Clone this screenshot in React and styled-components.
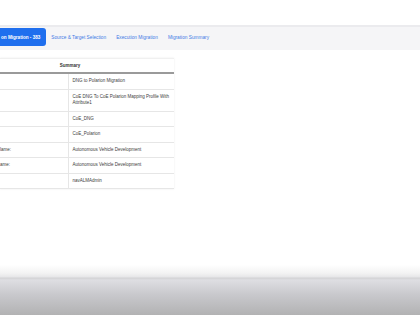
import React from "react";
import styled, { createGlobalStyle } from "styled-components";

const GlobalStyle = createGlobalStyle`
  html, body {
    margin: 0;
    padding: 0;
    background: #fff;
    overflow: hidden;
  }
  #root {
    height: 315px;
  }
`;

const Page = styled.div`
  height: 315px;
  display: flex;
  flex-direction: column;
  font-family: "Liberation Sans", Arial, sans-serif;
  overflow: hidden;
`;

const TabBar = styled.div`
  margin-top: 25px;
  height: 22px;
  display: flex;
  align-items: flex-start;
  padding-top: 1px;
  background: #f5f5f7;
  border-top: 2px solid #ebebee;
`;

const Tab = styled.div`
  height: 18px;
  display: flex;
  align-items: center;
  padding: ${(p) => (p.active ? "0 6px 0 1px" : "0 5px")};
  font-size: ${(p) => (p.active ? "4.6px" : "4.75px")};
  font-weight: ${(p) => (p.active ? 700 : 400)};
  color: ${(p) => (p.active ? "#fff" : "#3f7be6")};
  background: ${(p) => (p.active ? "#1f6fee" : "transparent")};
  border-radius: ${(p) => (p.active ? "0 3px 3px 0" : "0")};
  white-space: nowrap;
`;

const Content = styled.div`
  flex: 1;
  padding-top: 8px;
`;

const SummaryTable = styled.table`
  width: 174px;
  border-collapse: collapse;
  font-size: 4.5px;
  color: #3c3c3c;
  box-shadow: 0 0 2px rgba(0, 0, 0, 0.08);
`;

const HeadCell = styled.th`
  height: 13px;
  padding: 0 34px 0 0;
  font-weight: 700;
  color: #333;
  text-align: center;
  border-top: 1px solid #f0f0f0;
  border-bottom: 2px solid #9a9a9a;
`;

const Row = styled.tr`
  border-bottom: 1px solid #e6e6e6;
`;

const LabelCell = styled.td`
  width: 68px;
  box-sizing: border-box;
  padding: 4px 0;
  line-height: 6.5px;
  white-space: nowrap;
  border-right: 1px solid #e6e6e6;
  vertical-align: top;
`;

const ValueCell = styled.td`
  padding: 4px 3px 4px 4px;
  line-height: 6.5px;
  vertical-align: top;
`;

const Footer = styled.div`
  height: 50px;
  background: linear-gradient(
    to bottom,
    #ffffff 0px,
    #f3f3f3 8px,
    #e6e6e8 12px,
    #d2d2d4 13px,
    #dedee2 15px,
    #c8c8cc 30px,
    #b2b2b3 50px
  );
`;

const tabs = [
  { label: "on Migration - 383", active: true },
  { label: "Source & Target Selection" },
  { label: "Execution Migration" },
  { label: "Migration Summary" },
];

const rows = [
  { label: "", value: "DNG to Polarion Migration" },
  { label: "", value: "CoE DNG To CoE Polarion Mapping Profile With Attribute1" },
  { label: "", value: "CoE_DNG" },
  { label: "", value: "CoE_Polarion" },
  { label: "lame:", value: "Autonomous Vehicle Development" },
  { label: "ame:", value: "Autonomous Vehicle Development" },
  { label: "", value: "navALMAdmin" },
];

export default function App() {
  return (
    <Page>
      <GlobalStyle />
      <TabBar>
        {tabs.map((t) => (
          <Tab key={t.label} active={t.active}>
            {t.label}
          </Tab>
        ))}
      </TabBar>
      <Content>
        <SummaryTable>
          <thead>
            <tr>
              <HeadCell colSpan={2}>Summary</HeadCell>
            </tr>
          </thead>
          <tbody>
            {rows.map((r, i) => (
              <Row key={i}>
                <LabelCell>{r.label}</LabelCell>
                <ValueCell>{r.value}</ValueCell>
              </Row>
            ))}
          </tbody>
        </SummaryTable>
      </Content>
      <Footer />
    </Page>
  );
}
